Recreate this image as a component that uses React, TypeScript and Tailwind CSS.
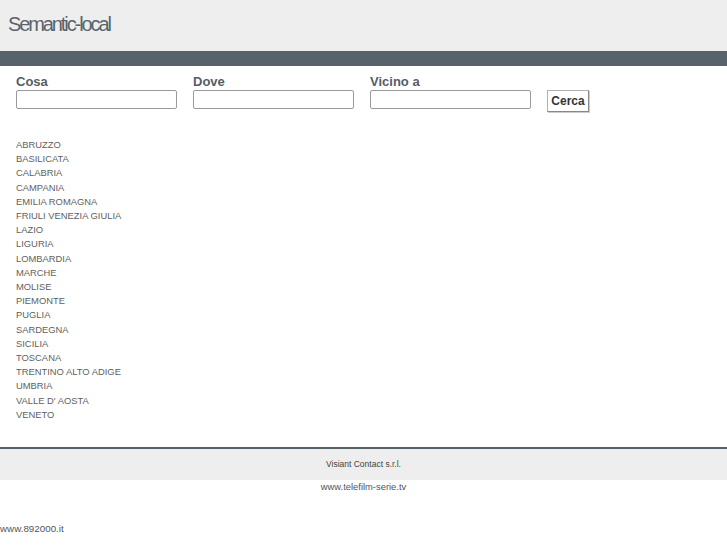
import React from "react";

const regions = [
  "ABRUZZO","BASILICATA","CALABRIA","CAMPANIA","EMILIA ROMAGNA","FRIULI VENEZIA GIULIA","LAZIO","LIGURIA","LOMBARDIA","MARCHE","MOLISE","PIEMONTE","PUGLIA","SARDEGNA","SICILIA","TOSCANA","TRENTINO ALTO ADIGE","UMBRIA","VALLE D' AOSTA","VENETO",
];

export default function App() {
  return (
    <div className="w-[727px] min-h-[545px] bg-white font-['Liberation_Sans',Arial,sans-serif]">
      <div className="h-[51px] bg-[#eeeeee] flex items-center pl-[8px] pb-[3px]">
        <span className="text-[20px] tracking-[-2.1px] text-[#5b646b] leading-none">Semantic-local</span>
      </div>
      <div className="h-[15px] bg-[#58626a]" />
      <div className="flex gap-4 px-4 pt-[8px]">
        {["Cosa", "Dove", "Vicino a"].map((l) => (
          <div key={l} className="flex flex-col w-[161px]">
            <span className="text-[13px] font-bold leading-[16px] text-[#555d65]">{l}</span>
            <input className="h-[19px] w-[161px] border border-[#9a9a9a] rounded-[2px] bg-white" />
          </div>
        ))}
        <div className="flex flex-col justify-end">
          <button className="h-[22px] w-[42px] mb-[-3px] border border-[#b0b0b0] border-r-[#888] border-b-[#888] bg-white text-[12px] font-bold text-[#333] leading-none shadow-[1px_1px_0_#ccc]">Cerca</button>
        </div>
      </div>
      <ul className="pl-4 pt-[29px] text-[9.4px] leading-[14.2px] text-[#5f5f5f]">
        {regions.map((r) => (
          <li key={r}>{r}</li>
        ))}
      </ul>
      <div className="mt-[25px] h-[2px] bg-[#58626a]" />
      <div className="h-[31px] bg-[#eeeeee] flex items-center justify-center text-[8.5px] text-[#444]">Visiant Contact s.r.l.</div>
      <div className="h-[14px] flex items-center justify-center text-[9.4px] text-[#555]">www.telefilm-serie.tv</div>
      <div className="mt-[28px] text-[9.8px] leading-[14px] text-[#555]">www.892000.it</div>
    </div>
  );
}
